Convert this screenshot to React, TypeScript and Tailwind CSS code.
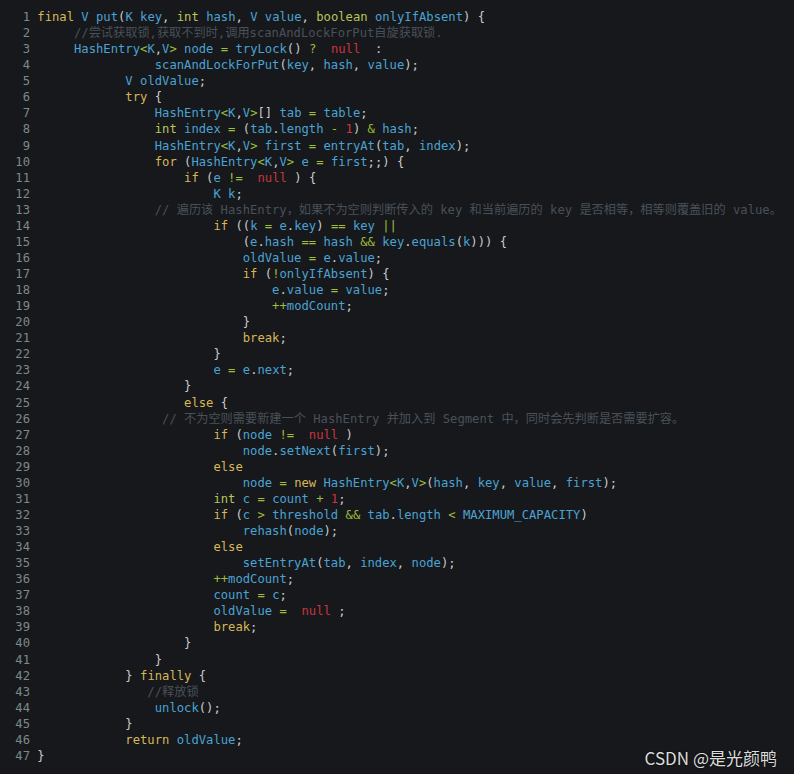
const code: string[] = [
  "final V put(K key, int hash, V value, boolean onlyIfAbsent) {",
  "     //尝试获取锁,获取不到时,调用scanAndLockForPut自旋获取锁.",
  "     HashEntry<K,V> node = tryLock() ?  null  :",
  "                scanAndLockForPut(key, hash, value);",
  "            V oldValue;",
  "            try {",
  "                HashEntry<K,V>[] tab = table;",
  "                int index = (tab.length - 1) & hash;",
  "                HashEntry<K,V> first = entryAt(tab, index);",
  "                for (HashEntry<K,V> e = first;;) {",
  "                    if (e !=  null ) {",
  "                        K k;",
  "                // 遍历该 HashEntry，如果不为空则判断传入的 key 和当前遍历的 key 是否相等，相等则覆盖旧的 value。",
  "                        if ((k = e.key) == key ||",
  "                            (e.hash == hash && key.equals(k))) {",
  "                            oldValue = e.value;",
  "                            if (!onlyIfAbsent) {",
  "                                e.value = value;",
  "                                ++modCount;",
  "                            }",
  "                            break;",
  "                        }",
  "                        e = e.next;",
  "                    }",
  "                    else {",
  "                 // 不为空则需要新建一个 HashEntry 并加入到 Segment 中，同时会先判断是否需要扩容。",
  "                        if (node !=  null )",
  "                            node.setNext(first);",
  "                        else",
  "                            node = new HashEntry<K,V>(hash, key, value, first);",
  "                        int c = count + 1;",
  "                        if (c > threshold && tab.length < MAXIMUM_CAPACITY)",
  "                            rehash(node);",
  "                        else",
  "                            setEntryAt(tab, index, node);",
  "                        ++modCount;",
  "                        count = c;",
  "                        oldValue =  null ;",
  "                        break;",
  "                    }",
  "                }",
  "            } finally {",
  "               //释放锁",
  "                unlock();",
  "            }",
  "            return oldValue;",
  "}",
];

const keywords = new Set(["final", "try", "for", "if", "else", "break", "return", "new", "finally"]);
const types = new Set(["int", "boolean"]);

function colorOf(tok: string): string {
  if (/^\s+$/.test(tok)) return "";
  if (keywords.has(tok)) return "text-[#d6b75a]";
  if (types.has(tok)) return "text-[#b9c55a]";
  if (tok === "null" || /^\d+$/.test(tok)) return "text-[#c9363b]";
  if (/^[A-Za-z_]/.test(tok)) return "text-[#4aa3d4]";
  if (/^[=!<>&|+\-?]+$/.test(tok)) return "text-[#9fbd3c]";
  return "text-[#c9ccd0]";
}

function Line({ text }: { text: string }) {
  const ci = text.indexOf("//");
  if (ci >= 0 && text.slice(0, ci).trim() === "") {
    return (
      <span>
        {text.slice(0, ci)}
        <span className="text-[#48515a]">{text.slice(ci)}</span>
      </span>
    );
  }
  const toks = text.match(/\s+|[A-Za-z_][A-Za-z0-9_]*|\d+|[=!<>&|+\-?]+|./g) || [];
  return (
    <span>
      {toks.map((t, i) => (
        <span key={i} className={colorOf(t)}>
          {t}
        </span>
      ))}
    </span>
  );
}

export default function App() {
  return (
    <div className="relative w-[794px] h-[774px] overflow-hidden bg-[#17181b]">
      <div className="pt-[9px] font-['DejaVu_Sans_Mono','Noto_Sans_CJK_SC',monospace] text-[12.2px] leading-[16.065px]">
        {code.map((l, i) => (
          <div key={i} className="flex whitespace-pre">
            <span className="w-[30px] shrink-0 text-right text-[#7b8a8a]">{i + 1}</span>
            <span className="ml-[7.3px]">
              <Line text={l} />
            </span>
          </div>
        ))}
      </div>
      <div className="absolute right-[17px] bottom-[8px] font-['Noto_Sans_CJK_SC',sans-serif] text-[17px] leading-none text-[#dcdcdc] [text-shadow:0_0_2px_rgba(0,0,0,0.8)]">
        CSDN @是光颜鸭
      </div>
    </div>
  );
}
